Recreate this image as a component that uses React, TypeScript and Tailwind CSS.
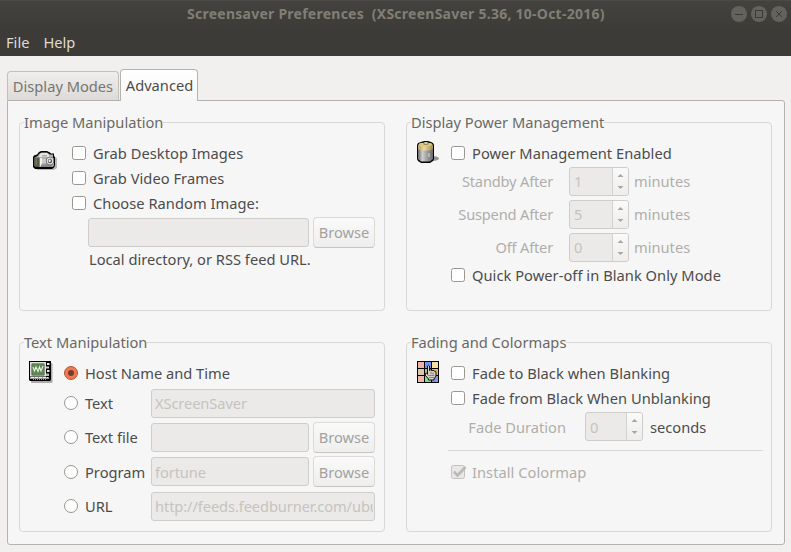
import type { ReactNode } from 'react';

function CameraIcon() {
  return (
    <svg width="26" height="22" viewBox="0 0 26 22">
      <path d="M3 19h18l3-2V7l-2-1z" fill="#000" opacity=".25" />
      <path d="M0 6l1-1.500 3-1L6 1l2-1h6l3 1.500 1 1h3v2l1 2v8l-1 2-2 1.500H2L0 16z" fill="#000" />
      <path d="M1.500 6.500l3-1.500 2-2.500 2-1h5.500l3 2h3v3l1 1v7l-1.500 1.500h-17L1.500 15z" fill="#b0b0ad" />
      <path d="M7 3l2-1h5l2 2v2H6z" fill="#e6e6e4" />
      <path d="M9 4h5v1.500H9z" fill="#aaaaa7" />
      <rect x="2" y="6.500" width="4.500" height="9.500" fill="#5b5947" />
      <rect x="2.500" y="8" width="1.500" height="6" fill="#77745e" />
      <rect x="7" y="7" width="2" height="8" fill="#f0f0ee" />
      <rect x="9" y="8" width="4" height="4" fill="#cbcbc9" />
      <rect x="8" y="13.500" width="11" height="2.500" fill="#858583" />
      <circle cx="17" cy="10" r="4.100" fill="#555" />
      <circle cx="17" cy="10" r="3.400" fill="#e2e2e2" />
      <circle cx="17" cy="10" r="2.200" fill="#555" />
      <circle cx="16.700" cy="9.700" r="1.200" fill="#eee" />
    </svg>
  );
}

function BatteryIcon() {
  return (
    <svg width="24" height="24" viewBox="0 0 24 24">
      <defs>
        <linearGradient id="cell" x1="0" x2="1">
          <stop offset="0" stopColor="#6d6d6d" />
          <stop offset=".3" stopColor="#cdcdcd" />
          <stop offset=".7" stopColor="#8f8f8f" />
          <stop offset="1" stopColor="#6a6a6a" />
        </linearGradient>
        <linearGradient id="brass" x1="0" x2="1">
          <stop offset="0" stopColor="#b5a25f" />
          <stop offset=".4" stopColor="#eadba0" />
          <stop offset="1" stopColor="#a08c4c" />
        </linearGradient>
      </defs>
      <ellipse cx="15.500" cy="17.500" rx="6.500" ry="2.500" fill="#444" opacity=".55" />
      <path d="M0 4l1-2 3-1 3-1h4l3 1 2 1 1 2v14l-1 2-3 2H4l-3-2-1-2z" fill="#000" />
      <path d="M1 8h15v10l-3 2.500H4L1 18z" fill="url(#cell)" />
      <path d="M1 4l2-2h11l2 2v4l-3 1.500H4L1 8z" fill="url(#brass)" />
      <ellipse cx="8.500" cy="3.500" rx="6.500" ry="2" fill="#d8c98b" />
      <ellipse cx="9" cy="2.500" rx="2.700" ry="1.500" fill="#9a884b" />
      <ellipse cx="9" cy="2" rx="1.800" ry=".8" fill="#f5edc6" />
      <rect x="11" y="12" width="2" height="4" fill="#b4b4b4" />
    </svg>
  );
}

function MonitorIcon() {
  return (
    <svg width="24" height="24" viewBox="0 0 24 24">
      <rect x="2" y="2" width="21.500" height="20" rx="1" fill="#000" opacity=".3" />
      <path d="M0 0h22v19l-1 1H1l-1-1z" fill="#000" />
      <rect x="1" y="1" width="16" height="14.500" fill="#dfe0dc" />
      <rect x="2.500" y="2.500" width="13" height="12" rx="1" fill="#3c4b38" />
      <rect x="3" y="3" width="12" height="11" rx="1" fill="#5f8455" />
      <path d="M4 6l1.500 4L7 6l2 4.500L10.500 6l1.500 4L14 5" fill="none" stroke="#e5f3df" strokeWidth="1.100" />
      <rect x="18" y="2" width="2.500" height="2" fill="#eee" />
      <rect x="17" y="5.500" width="3" height="2" fill="#ccc" />
      <rect x="18" y="9" width="2.500" height="2" fill="#eee" />
      <rect x="17" y="12.500" width="3" height="2.500" fill="#bbb" />
      <rect x="1" y="16" width="19" height="2" fill="#999" />
      <path d="M2 16.500h17" stroke="#f2f2f2" strokeDasharray="3 1" />
      <path d="M4 18.500h13" stroke="#999" strokeDasharray="1 1" />
    </svg>
  );
}

function ColormapIcon() {
  return (
    <svg width="22" height="22" viewBox="0 0 22 22">
      <rect width="22" height="22" fill="#000" />
      <rect x="1" y="1" width="6" height="6" fill="#f0b2a8" />
      <rect x="8" y="1" width="6" height="6" fill="#6f91f0" />
      <rect x="15" y="1" width="6" height="6" fill="#f4df9c" />
      <rect x="1" y="8" width="6" height="6" fill="#ddc6b0" />
      <rect x="8" y="8" width="6" height="6" fill="#b9b5a8" />
      <rect x="15" y="8" width="6" height="6" fill="#e7b46e" />
      <rect x="1" y="15" width="6" height="6" fill="#efb5b1" />
      <rect x="8" y="15" width="6" height="6" fill="#83dc7e" />
      <rect x="15" y="15" width="6" height="6" fill="#8795e8" />
      <path
        d="M10.500 5q1-1.500 2 0v4.500l1-.7 1.300.9 1.300-.5 1.200 1 1.200 0 .5 1.300v3.500l-2 3v1h-5.500v-1L8.500 14.500l-.3-2 1-.5 1.300 1.300z"
        fill="#d3cfc3"
        stroke="#111"
        strokeWidth="1"
      />
      <path d="M14 11v2M16 11.500v2" stroke="#555" strokeWidth=".7" />
      <path d="M11 14.500h6.500M12 16.500h5" stroke="#8b877c" />
    </svg>
  );
}

function WindowButton({ children }: { children: ReactNode }) {
  return (
    <svg width="16" height="16" viewBox="0 0 16 16">
      <circle cx="8" cy="8" r="8" fill="#64625c" />
      <g fill="none" stroke="#3b3a36" strokeWidth="1">
        {children}
      </g>
    </svg>
  );
}

function Checkbox({ label, checked, disabled }: { label: string; checked?: boolean; disabled?: boolean }) {
  return (
    <label className={`flex h-[25px] items-center ${disabled ? 'text-[#b0aeab]' : 'text-[#4c4c4c]'}`}>
      {checked ? (
        <svg width="16" height="14" viewBox="0 0 16 14" className="mr-[5px] shrink-0 overflow-visible">
          <rect x=".5" y=".5" width="13" height="13" rx="2" fill="#e9e8e6" stroke="#c4c2be" />
          <path d="M3 6.500l3.500 4L14.500 2" fill="none" stroke="#bab8b4" strokeWidth="2.600" />
        </svg>
      ) : (
        <span className="mr-[7px] size-[14px] shrink-0 rounded-[2.500px] border border-[#9a9690] bg-white" />
      )}
      <span className="tracking-[0.04px]">{label}</span>
    </label>
  );
}

function Radio({ label, selected }: { label: string; selected?: boolean }) {
  return (
    <label className={`flex shrink-0 items-center whitespace-nowrap text-[#4c4c4c] ${selected ? '' : 'w-[87px]'}`}>
      {selected ? (
        <span className="mr-[7px] flex size-[14px] shrink-0 items-center justify-center rounded-full border border-[#b3553a] bg-[#f0794f]">
          <span className="size-[6px] rounded-full bg-[#743d2b]" />
        </span>
      ) : (
        <span className="mr-[7px] size-[14px] shrink-0 rounded-full border border-[#9a9690] bg-white" />
      )}
      <span>{label}</span>
    </label>
  );
}

function Entry({ value = '', wide }: { value?: string; wide?: boolean }) {
  return (
    <div
      className={`flex h-[29px] items-center rounded-[3px] border border-[#cfcdca] bg-[#ebeae8] pl-[3px] pr-px text-[#c6c3bf] ${wide ? 'w-[224px]' : 'w-[158px]'}`}
    >
      <span className="w-full overflow-hidden whitespace-nowrap tracking-[-0.1px]">{value}</span>
    </div>
  );
}

function Browse() {
  return (
    <div className="ml-1 flex h-[31px] w-[62px] items-center justify-center rounded-[4px] border border-[#dcdad7] border-b-[#c6c4c0] bg-gradient-to-b from-[#fafafa] to-[#efeeed] text-[#a3a19e]">
      Browse
    </div>
  );
}

function Spin({ value, narrow }: { value: string; narrow?: boolean }) {
  return (
    <div
      className={`flex h-[29px] rounded-[3px] border border-[#cfcdca] bg-[#ebeae8] ${narrow ? 'w-[58px]' : '-mb-px mt-px w-[60px]'}`}
    >
      <span
        className={`flex flex-1 items-center border-r border-[#d4d2cf] pl-[4px] text-[#c6c3bf] ${narrow ? '' : 'pb-px'}`}
      >
        {value}
      </span>
      <svg width="15" height="27" viewBox="0 0 15 27" className="rounded-r-[2px] bg-gradient-to-b from-[#fafafa] to-[#eeedec]">
        <path d="M4.500 9h6L7.500 6z" fill="#a8a6a2" />
        <path d="M4.500 18h6l-3 3z" fill="#a8a6a2" />
      </svg>
    </div>
  );
}

function PowerRow({ label, value }: { label: string; value: string }) {
  return (
    <div className="flex h-[33px] items-center pb-1 text-[#b0aeab]">
      <span className="mr-4 w-[102px] text-right tracking-[-0.2px]">{label}</span>
      <Spin value={value} />
      <span className="ml-[5px]">minutes</span>
    </div>
  );
}

function Group({ title, tall, children }: { title: string; tall?: boolean; children: ReactNode }) {
  return (
    <fieldset
      className={`w-[366px] rounded-[4px] border border-[#d9d8d5] pl-[4px] ${tall ? 'h-[201px]' : 'h-[200px]'}`}
    >
      <legend className="h-[22px] leading-[22px] text-[#6b6864]">{title}</legend>
      <div className="flex items-start">{children}</div>
    </fieldset>
  );
}

export default function App() {
  return (
    <div className="h-[552px] w-[791px] overflow-hidden bg-[#f1f0ee] font-['Noto_Sans',sans-serif] text-[14.667px] leading-[20px]">
      <header className="flex h-[28px] items-center border-t border-[#4b4a46] bg-gradient-to-b from-[#43423e] to-[#3d3c38]">
        <h1 className="-mt-[2px] ml-[187px] w-[424px] whitespace-pre text-[14px] font-bold tracking-[0.25px] text-[#817e77]">
          {'Screensaver Preferences  (XScreenSaver 5.36, 10-Oct-2016)'}
        </h1>
        <div className="-mt-px ml-[120px] flex gap-1">
          <WindowButton><path d="M4 8.500h8" /></WindowButton>
          <WindowButton><rect x="4.500" y="4.500" width="7" height="7" /></WindowButton>
          <WindowButton><path d="M5 5l6 6M11 5l-6 6" /></WindowButton>
        </div>
      </header>
      <nav className="flex h-[28px] items-center gap-[14px] bg-[#3c3b37] pl-[6px] text-[#dfdbd2]">
        <span>File</span>
        <span>Help</span>
      </nav>
      <main className="px-[7px] pt-[13px]">
        <div className="relative z-10 flex h-[32px] items-end">
          <div className="mb-[1px] flex h-[29px] w-[112px] items-center justify-center rounded-t-[4px] border border-b-0 border-[#c3c0bc] bg-gradient-to-b from-[#efeeec] to-[#dddbd8] text-[#787570]">
            Display Modes
          </div>
          <div className="ml-[1px] flex h-[32px] w-[78px] items-center justify-center rounded-t-[4px] border border-b-0 border-[#b6b3ae] bg-gradient-to-b from-white to-[#f6f6f6] pb-[1px] pl-px text-[#4c4c4c]">
            Advanced
          </div>
        </div>
        <section className="-mt-px grid h-[445px] w-[778px] grid-cols-[366px_366px] content-start gap-x-[21px] gap-y-[20px] rounded-r-[3px] rounded-bl-[3px] border border-[#b6b3ae] bg-[#f6f6f6] pl-[11px] pt-[10px]">
          <Group title="Image Manipulation">
            <div className="ml-[9px] mt-[18px] w-[39px] shrink-0"><CameraIcon /></div>
            <div className="pt-[7px]">
              <Checkbox label="Grab Desktop Images" />
              <Checkbox label="Grab Video Frames" />
              <Checkbox label="Choose Random Image:" />
              <div className="ml-[16px] flex h-[33px] items-center pt-px">
                <div className="h-[29px] w-[221px] rounded-[3px] border border-[#cfcdca] bg-[#ebeae8]" />
                <Browse />
              </div>
              <p className="ml-[17px] mt-[1px] text-[#4c4c4c]">Local directory, or RSS feed URL.</p>
            </div>
          </Group>
          <Group title="Display Power Management">
            <div className="ml-[6px] mt-[8px] w-[34px] shrink-0"><BatteryIcon /></div>
            <div className="pt-[7px]">
              <Checkbox label="Power Management Enabled" />
              <div className="pt-[1px]">
                <PowerRow label="Standby After" value="1" />
                <PowerRow label="Suspend After" value="5" />
                <PowerRow label="Off After" value="0" />
              </div>
              <div className="-mt-[3px]"><Checkbox label="Quick Power-off in Blank Only Mode" /></div>
            </div>
          </Group>
          <Group title="Text Manipulation" tall>
            <div className="ml-[5px] mt-[8px] w-[35px] shrink-0"><MonitorIcon /></div>
            <div className="pt-[7px]">
              <div className="flex h-[25px] items-center"><Radio label="Host Name and Time" selected /></div>
              <div className="flex h-[35px] items-center pt-px"><Radio label="Text" /><Entry value="XScreenSaver" wide /></div>
              <div className="flex h-[34px] items-center"><Radio label="Text file" /><Entry /><Browse /></div>
              <div className="flex h-[35px] items-center"><Radio label="Program" /><Entry value="fortune" /><Browse /></div>
              <div className="flex h-[34px] items-center"><Radio label="URL" /><Entry value="http://feeds.feedburner.com/ubuntu-news" wide /></div>
            </div>
          </Group>
          <Group title="Fading and Colormaps" tall>
            <div className="ml-[6px] mt-[8px] w-[34px] shrink-0"><ColormapIcon /></div>
            <div className="pt-[7px]">
              <Checkbox label="Fade to Black when Blanking" />
              <Checkbox label="Fade from Black When Unblanking" />
              <div className="flex h-[33px] items-center text-[#b0aeab]">
                <span className="mr-[19px] w-[115px] text-right">Fade Duration</span>
                <Spin value="0" narrow />
                <span className="ml-[7px] text-[#4c4c4c]">seconds</span>
              </div>
              <div className="-ml-[3px] mb-[8px] mt-[7px] h-px w-[315px] bg-[#dad8d6]" />
              <Checkbox label="Install Colormap" checked disabled />
            </div>
          </Group>
        </section>
      </main>
    </div>
  );
}
